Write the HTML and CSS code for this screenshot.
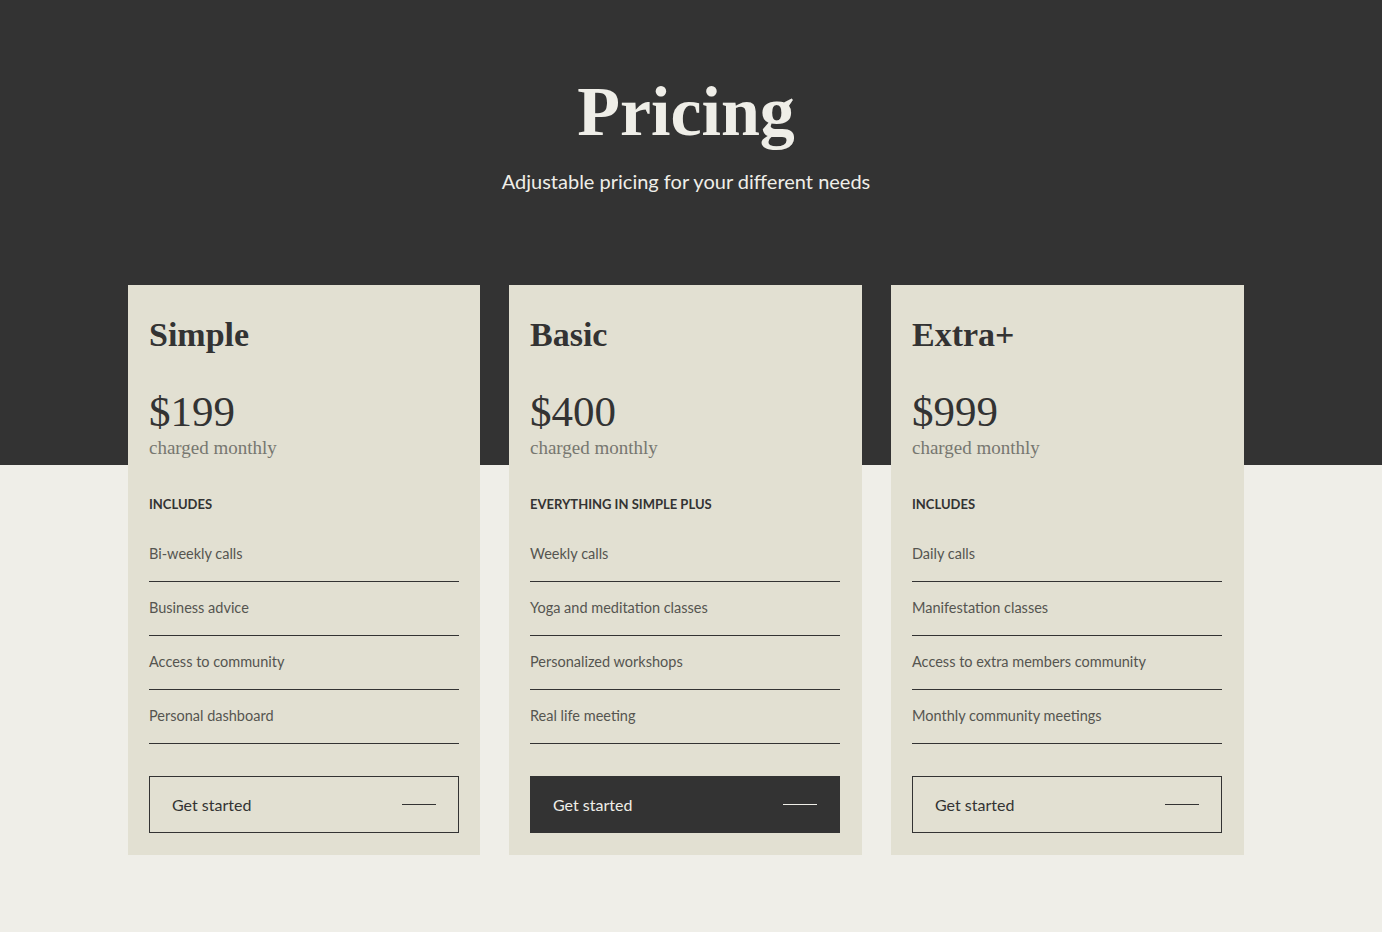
FILE: index.html
```html
<!DOCTYPE html>
<html lang="en">
<head>
<meta charset="utf-8">
<title>Pricing</title>
<link rel="stylesheet" href="styles.css">
</head>
<body>
<main class="page">
  <header class="hero">
    <h1 class="hero-title">Pricing</h1>
    <p class="hero-sub">Adjustable pricing for your different needs</p>
  </header>
  <section class="plans">
    <article class="plan">
      <h2 class="plan-name">Simple</h2>
      <div class="plan-price">$199</div>
      <div class="plan-period">charged monthly</div>
      <h3 class="plan-label">INCLUDES</h3>
      <ul class="plan-list">
        <li>Bi-weekly calls</li>
        <li>Business advice</li>
        <li>Access to community</li>
        <li>Personal dashboard</li>
      </ul>
      <a class="plan-btn" href="#"><span>Get started</span><span class="dash"></span></a>
    </article>
    <article class="plan">
      <h2 class="plan-name">Basic</h2>
      <div class="plan-price">$400</div>
      <div class="plan-period">charged monthly</div>
      <h3 class="plan-label">EVERYTHING IN SIMPLE PLUS</h3>
      <ul class="plan-list">
        <li>Weekly calls</li>
        <li>Yoga and meditation classes</li>
        <li>Personalized workshops</li>
        <li>Real life meeting</li>
      </ul>
      <a class="plan-btn plan-btn-dark" href="#"><span>Get started</span><span class="dash"></span></a>
    </article>
    <article class="plan">
      <h2 class="plan-name">Extra+</h2>
      <div class="plan-price">$999</div>
      <div class="plan-period">charged monthly</div>
      <h3 class="plan-label">INCLUDES</h3>
      <ul class="plan-list">
        <li>Daily calls</li>
        <li>Manifestation classes</li>
        <li>Access to extra members community</li>
        <li>Monthly community meetings</li>
      </ul>
      <a class="plan-btn" href="#"><span>Get started</span><span class="dash"></span></a>
    </article>
  </section>
</main>
</body>
</html>
```
FILE: styles.css
```css
* { box-sizing: border-box; }
html, body { margin: 0; padding: 0; }
body {
  background: linear-gradient(#333333 0, #333333 465px, #efeee8 465px);
  min-height: 932px;
  font-family: "Lato", "Noto Sans", sans-serif;
  color: #333333;
}
.page {
  width: 1372px;
  padding-bottom: 78px;
}
.hero {
  text-align: center;
  padding-top: 72px;
  height: 285px;
}
.hero-title {
  margin: 0;
  font-family: "Liberation Serif", serif;
  font-weight: 700;
  font-size: 70px;
  line-height: 80px;
  color: #efeee8;
}
.hero-sub {
  margin: 16px 0 0;
  font-size: 20px;
  line-height: 26px;
  color: #efeee8;
}
.plans {
  width: 1116px;
  margin: 0 auto;
  display: grid;
  grid-template-columns: 352px 353px 353px;
  column-gap: 29px;
}
.plan {
  background: #e2e0d2;
  padding: 30px 21px 22px;
  display: flex;
  flex-direction: column;
}
.plan > * { width: 310px; }
.plan-name {
  margin: 0;
  font-family: "Liberation Serif", serif;
  font-weight: 700;
  font-size: 34px;
  line-height: 40px;
  color: #333333;
}
.plan-price {
  margin-top: 32px;
  font-family: "Liberation Serif", serif;
  font-size: 43px;
  line-height: 50px;
}
.plan-period {
  font-family: "Liberation Serif", serif;
  font-size: 19px;
  line-height: 22px;
  color: #777770;
}
.plan-label {
  margin: 36px 0 0;
  font-size: 13px;
  line-height: 18px;
  font-weight: 700;
  color: #333333;
}
.plan-list {
  list-style: none;
  margin: 15px 0 0;
  padding: 0;
}
.plan-list li {
  font-size: 14.5px;
  line-height: 20px;
  padding: 16px 0 17px;
  border-bottom: 1px solid #333333;
  color: #555550;
}
.plan-btn {
  margin-top: 32px;
  height: 57px;
  border: 1px solid #333333;
  display: flex;
  align-items: center;
  justify-content: space-between;
  padding: 0 22px 0 22px;
  text-decoration: none;
  color: #333333;
  font-size: 16px;
}
.plan-btn .dash {
  width: 34px;
  height: 1px;
  background: #333333;
}
.plan-btn-dark {
  background: #333333;
  color: #efeee8;
}
.plan-btn-dark .dash { background: #efeee8; }
```
